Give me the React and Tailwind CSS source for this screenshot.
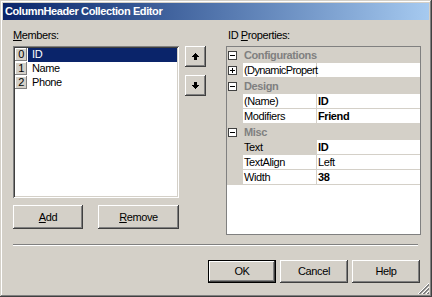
import React from "react";

const raised =
  "shadow-[inset_-1px_-1px_#404040,inset_1px_1px_#ffffff,inset_-2px_-2px_#808080]";
const sunken =
  "shadow-[inset_1px_1px_#808080,inset_-1px_-1px_#ffffff,inset_2px_2px_#404040,inset_-2px_-2px_#d4d0c8]";

const members = ["ID", "Name", "Phone"];

const props = [
  { cat: "Configurations" },
  { name: "(DynamicPropert", value: "", plus: true },
  { cat: "Design" },
  { name: "(Name)", value: "ID", bold: true },
  { name: "Modifiers", value: "Friend", bold: true },
  { cat: "Misc" },
  { name: "Text", value: "ID", bold: true, selected: true },
  { name: "TextAlign", value: "Left" },
  { name: "Width", value: "38", bold: true },
];

const Arrow = ({ down }) => (
  <svg width="7" height="7" viewBox="0 0 7 7" className={down ? "rotate-180" : ""}>
    <rect x="3" y="0" width="1" height="1" fill="#000" />
    <rect x="2" y="1" width="3" height="1" fill="#000" />
    <rect x="1" y="2" width="5" height="1" fill="#000" />
    <rect x="0" y="3" width="7" height="1" fill="#000" />
    <rect x="2" y="4" width="3" height="3" fill="#000" />
  </svg>
);

const Box = ({ plus }) => (
  <div className="w-[9px] h-[9px] border border-[#404040] bg-white flex items-center justify-center relative">
    <div className="w-[5px] h-px bg-black" />
    {plus && <div className="absolute w-px h-[5px] bg-black" />}
  </div>
);

const Button = ({ children, className = "" }) => (
  <div
    className={`bg-[#d4d0c8] flex items-center justify-center ${raised} ${className}`}
  >
    {children}
  </div>
);

export default function App() {
  return (
    <div
      className={`w-[432px] h-[297px] bg-[#d4d0c8] p-[3px] relative text-[11px] tracking-[-0.4px] text-black font-['Liberation_Sans',Arial,sans-serif] shadow-[inset_-1px_-1px_#404040,inset_1px_1px_#d4d0c8,inset_-2px_-2px_#808080,inset_2px_2px_#ffffff]`}
    >
      {/* TITLE */}
      <div className="h-[17px] bg-linear-to-r from-[#0a246a] to-[#a6caf0] flex items-center pl-[2px]">
        <span className="text-white font-bold leading-none">
          ColumnHeader Collection Editor
        </span>
      </div>

      <div className="pl-[10px] pt-[9px] flex">
        {/* LEFT COLUMN */}
        <div className="flex flex-col w-[166px]">
          <div className="h-[13px] leading-[13px]">
            <span className="underline">M</span>embers:
          </div>
          <div className={`mt-[4px] h-[152px] bg-white p-[2px] ${sunken}`}>
            {members.map((m, i) => (
              <div key={m} className="h-[14px] flex">
                <div
                  className={`w-[12px] h-[13px] bg-[#d4d0c8] flex items-center justify-center shadow-[inset_-1px_-1px_#808080,inset_1px_1px_#ffffff]`}
                >
                  {i}
                </div>
                <div
                  className={`flex-1 ml-[1px] pl-[4px] leading-[13px] ${
                    i === 0 ? "bg-[#0a246a] text-white" : ""
                  }`}
                >
                  {m}
                </div>
              </div>
            ))}
          </div>
          <div className="mt-[7px] flex justify-between">
            <Button className="w-[70px] h-[24px]">
              <span>
                <span className="underline">A</span>dd
              </span>
            </Button>
            <Button className="w-[81px] h-[24px]">
              <span>
                <span className="underline">R</span>emove
              </span>
            </Button>
          </div>
        </div>

        {/* UP / DOWN */}
        <div className="ml-[6px] pt-[17px] flex flex-col">
          <Button className="w-[21px] h-[21px]">
            <Arrow />
          </Button>
          <Button className="w-[21px] h-[21px] mt-[8px]">
            <Arrow down />
          </Button>
        </div>

        {/* RIGHT COLUMN */}
        <div className="ml-[20px] flex flex-col w-[195px]">
          <div className="h-[13px] leading-[13px] pl-[2px]">
            ID <span className="underline">P</span>roperties:
          </div>
          <div className="mt-[4px] h-[189px] bg-white border border-[#808080]">
            {props.map((p, i) =>
              p.cat ? (
                <div key={i} className="h-[16px] bg-[#d4d0c8] flex items-center">
                  <div className="w-[16px] pl-[1px]">
                    <Box />
                  </div>
                  <span className="font-bold text-[#808080] pl-[1px]">{p.cat}</span>
                </div>
              ) : (
                <div key={i} className="h-[15px] flex">
                  <div className="w-[16px] bg-[#d4d0c8] flex items-center pl-[1px]">
                    {p.plus && <Box plus />}
                  </div>
                  <div
                    className={`w-[74px] border-r border-b border-[#d4d0c8] pl-[1px] leading-[14px] whitespace-nowrap ${
                      p.plus ? "tracking-[-0.6px]" : ""
                    } ${p.selected ? "bg-[#d4d0c8]" : ""}`}
                  >
                    {p.name}
                  </div>
                  <div
                    className={`flex-1 border-b border-[#d4d0c8] pl-[1px] leading-[14px] ${
                      p.bold ? "font-bold" : ""
                    }`}
                  >
                    {p.value}
                  </div>
                </div>
              )
            )}
          </div>
        </div>
      </div>

      {/* SEPARATOR */}
      <div className="ml-[10px] mt-[9px] w-[405px] h-[2px] border-t border-b border-t-[#808080] border-b-white" />

      {/* BOTTOM BUTTONS */}
      <div className="mt-[14px] pr-[9px] flex justify-end gap-[4px]">
        <div className="w-[68px] h-[23px] border border-black">
          <Button className="w-full h-full">OK</Button>
        </div>
        <Button className="w-[68px] h-[23px]">Cancel</Button>
        <Button className="w-[68px] h-[23px]">Help</Button>
      </div>

      {/* RESIZE GRIP */}
      <svg
        width="12"
        height="12"
        viewBox="0 0 12 12"
        className="absolute right-[3px] bottom-[3px]"
      >
        <line x1="12" y1="1" x2="1" y2="12" stroke="#ffffff" />
        <line x1="12" y1="2" x2="2" y2="12" stroke="#808080" />
        <line x1="12" y1="3" x2="3" y2="12" stroke="#808080" />
        <line x1="12" y1="5" x2="5" y2="12" stroke="#ffffff" />
        <line x1="12" y1="6" x2="6" y2="12" stroke="#808080" />
        <line x1="12" y1="7" x2="7" y2="12" stroke="#808080" />
        <line x1="12" y1="9" x2="9" y2="12" stroke="#ffffff" />
        <line x1="12" y1="10" x2="10" y2="12" stroke="#808080" />
        <line x1="12" y1="11" x2="11" y2="12" stroke="#808080" />
      </svg>
    </div>
  );
}
